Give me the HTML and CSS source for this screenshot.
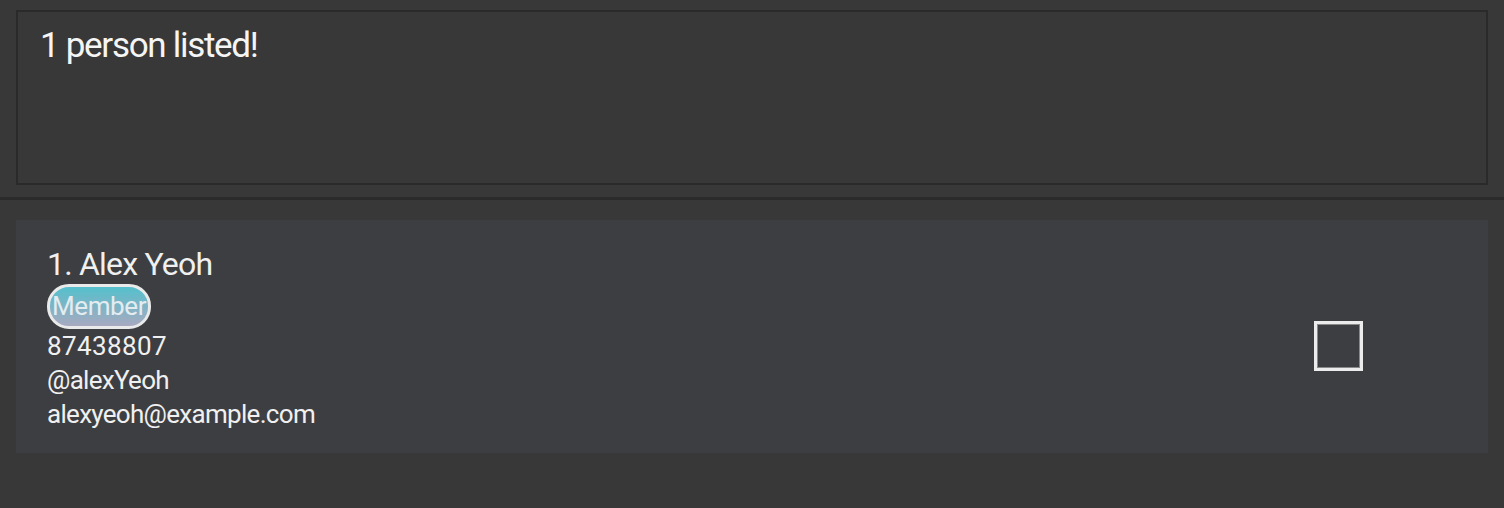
FILE: index.html
```html
<!DOCTYPE html>
<html lang="en">
<head>
    <meta charset="UTF-8">
    <meta name="viewport" content="width=device-width, initial-scale=1.0">
    <title>Address Book</title>
    <link rel="stylesheet" href="styles.css">
</head>
<body>
    <div class="result-box">
        <div class="result-text">1 person listed!</div>
    </div>
    <div class="divider"></div>

    <div class="person-list">
        <div class="card">
            <div class="card-info">
                <div class="name">1. Alex Yeoh</div>
                <div class="tags">
                    <span class="tag">Member</span>
                </div>
                <div class="field phone">87438807</div>
                <div class="field">@alexYeoh</div>
                <div class="field">alexyeoh@example.com</div>
            </div>
            <div class="check-box"></div>
        </div>
    </div>
</body>
</html>
```

FILE: styles.css
```css
body {
    margin: 0;
    background-color: #383838;
    font-family: Roboto, 'Open Sans', sans-serif;
    color: #f2f2f2;
}

.result-box {
    margin: 10px 16px 0 16px;
    height: 171px;
    border: 2px solid #2a2a2a;
    padding: 0 22px;
}

.result-text {
    font-size: 35px;
    line-height: 44px;
    letter-spacing: -1.3px;
    padding-top: 12px;
    color: #f5f5f5;
}

.divider {
    margin-top: 12px;
    height: 3px;
    background-color: #2b2b2b;
}

.person-list {
    padding: 20px 16px;
}

.card {
    display: flex;
    justify-content: space-between;
    background-color: #3d3e41;
    padding: 24px 125px 22px 31px;
}

.name {
    font-size: 32px;
    line-height: 40px;
    letter-spacing: -0.8px;
    color: #f0f0f0;
}

.tags {
    display: flex;
}

.tag {
    font-size: 26px;
    line-height: 35px;
    letter-spacing: -0.4px;
    padding: 2px 2px;
    border: 3px solid #eaeaea;
    border-radius: 22px;
    background: linear-gradient(to bottom, #55c0cc, #a7a9c0);
    color: #e4ecf0;
}

.field {
    font-size: 26px;
    line-height: 34px;
    letter-spacing: -0.7px;
    color: #f0f0f0;
}

.field.phone {
    letter-spacing: 0.4px;
}

.check-box {
    align-self: center;
    margin-top: 17px;
    width: 43px;
    height: 44px;
    border: 3px solid #ececec;
    box-shadow: inset 0 0 0 1px #8a8a8a;
}
```
